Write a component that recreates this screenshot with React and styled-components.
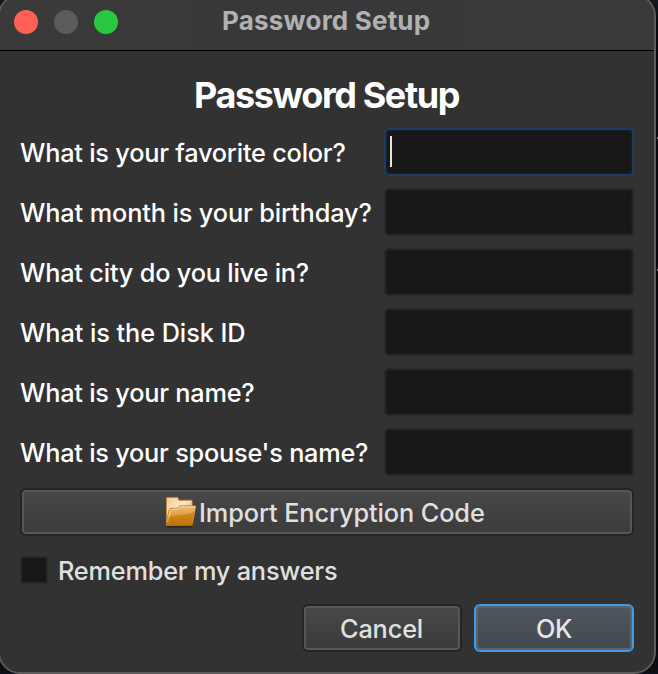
import React from "react";
import styled, { createGlobalStyle } from "styled-components";

const Global = createGlobalStyle`
  * { box-sizing: border-box; }
  html, body { margin: 0; height: 100%; background: #08090d; overflow: hidden; }
  body { font-family: Inter, "Liberation Sans", sans-serif; }
`;

const Desktop = styled.div`
  width: 658px;
  height: 674px;
  overflow: hidden;
  background:
    linear-gradient(#8c8c8c, #8c8c8c) 657px 137px / 1px 2px no-repeat,
    linear-gradient(#8c8c8c, #8c8c8c) 657px 269px / 1px 2px no-repeat,
    linear-gradient(180deg, #111a24 0, #07090c 24px, #050507 640px, #0d0f17 674px);
`;

const Window = styled.main`
  width: 658px;
  height: 680px;
  margin: -6px 0 0 -2px;
  border: 2px solid #5b5b5b;
  border-radius: 22px;
  overflow: hidden;
  background: #323232;
  display: flex;
  flex-direction: column;
`;

const TitleBar = styled.header`
  height: 55px;
  flex: none;
  background: linear-gradient(90deg, #3a3a3a, #38383a 50%, #3a3a39);
  border-bottom: 1px solid #000;
  display: grid;
  grid-template-columns: 222px 1fr;
  align-items: center;
`;

const Lights = styled.div`
  display: flex;
  gap: 16px;
  padding-left: 14px;
  margin-top: -2px;
`;

const Light = styled.span`
  width: 24px;
  height: 24px;
  border-radius: 50%;
  background: ${(p) => p.$color};
`;

const Label = styled.span`
  display: block;
  font-size: ${(p) => p.$size || 25.3}px;
  font-weight: ${(p) => p.$weight || 450};
  letter-spacing: ${(p) => p.$track || 0}px;
  line-height: 32px;
  color: ${(p) => p.$color || "#fff"};
  white-space: nowrap;
`;

const Title = styled(Label)`
  margin-top: -4px;
`;

const Content = styled.section`
  padding: 28px 20px 0;
  width: 654px;
`;

const Heading = styled.h1`
  margin: 0 0 14px 174px;
  height: 35px;
`;

const Questions = styled.div`
  display: grid;
  gap: 12px;
`;

const Question = styled.label`
  display: grid;
  grid-template-columns: 364px 250px;
  align-items: center;
  height: 48px;
`;

const QuestionText = styled(Label)`
  padding-top: 1px;
`;

const Field = styled.span`
  display: flex;
  align-items: center;
  height: 48px;
  padding-left: 4px;
  border: 2px solid ${(p) => (p.$focused ? "#1d3b5f" : "#272727")};
  border-radius: 5px;
  background: #171717;
  box-shadow: inset 0 0 0 1px ${(p) => (p.$focused ? "#17202a" : "#1b1b1b")};
`;

const Caret = styled.span`
  width: 2px;
  height: 31px;
  margin-top: -1px;
  background: #e8e3dd;
`;

const Button = styled.button`
  height: 48px;
  width: ${(p) => p.$width}px;
  padding: 1px 0 0 ${(p) => p.$inset}px;
  display: flex;
  align-items: center;
  font-family: inherit;
  border: 2px solid ${(p) => (p.$primary ? "#3d9bea" : "#252525")};
  border-radius: 6px;
  background: ${(p) =>
    p.$primary ? "linear-gradient(#50565e, #414850)" : "linear-gradient(#484848, #3b3b3b)"};
  box-shadow: inset 0 0 0 2px ${(p) => (p.$primary ? "#5d646c" : "#575757")};
`;

const ImportButton = styled(Button)`
  margin-top: 12px;
`;

const Folder = styled.svg`
  width: 32px;
  height: 32px;
  flex: none;
  margin: -2px 2px 0 1px;
`;

const Remember = styled.label`
  display: flex;
  gap: 10px;
  align-items: center;
  height: 28px;
  margin-top: 20px;
`;

const RememberText = styled(Label)`
  padding-top: 2px;
`;

const Checkbox = styled.span`
  width: 28px;
  height: 28px;
  border: 2px solid #292929;
  border-radius: 2px;
  background: #171717;
`;

const Actions = styled.footer`
  display: flex;
  justify-content: flex-end;
  gap: 12px;
  margin-top: 20px;
`;

const questions = [
  ["What is your favorite color?", -0.22],
  ["What month is your birthday?", -0.13],
  ["What city do you live in?", -0.2],
  ["What is the Disk ID", -0.07],
  ["What is your name?", -0.22],
  ["What is your spouse's name?", -0.23],
];

function FolderIcon() {
  return (
    <Folder viewBox="0 0 32 32" aria-hidden="true">
      <defs>
        <linearGradient id="back" x1="0" y1="0" x2="1" y2="1">
          <stop offset="0" stopColor="#f6c98f" />
          <stop offset=".45" stopColor="#fbe8cd" />
          <stop offset="1" stopColor="#d8963a" />
        </linearGradient>
        <linearGradient id="front" x1="0" y1="0" x2="0" y2="1">
          <stop offset="0" stopColor="#f0bd70" />
          <stop offset=".5" stopColor="#dc9c3c" />
          <stop offset="1" stopColor="#b97504" />
        </linearGradient>
      </defs>
      <path d="M2 30.8h25" stroke="#292725" strokeWidth="1.4" />
      <path d="M1.4 29V2.2Q1.4 1.4 2.3 1.4H12q1 0 1.3 1l.5 1.8h12.4q1 0 1 1V28z" fill="url(#back)" stroke="#c37e22" strokeWidth=".8" />
      <path d="M1.5 29.8 4.1 14.3q.3-1.6 1.8-1.7l6.4-.5 2.6-2.2h15.4q.7 0 .6.8l-3.1 17.7q-.2 1.4-1.5 1.4z" fill="url(#front)" />
      <path d="M1.6 25 4 14.2q.3-1.6 1.8-1.7l6.5-.4 2.6-2.3h15.8" fill="none" stroke="#b97820" strokeWidth=".9" />
      <path d="M3 26 5 15q.2-1.5 1.6-1.6l6.1-.4 2.7-2.2h14.5" fill="none" stroke="#ffe0aa" strokeWidth=".8" />
      <path d="m2.8 23.5 1.1-2.2c7-3 17-1.4 25.5-5.5l-2.3 12.5q-.2 1.5-1.5 1.5H1.5z" fill="#bd7300" opacity=".55" />
    </Folder>
  );
}

export default function App() {
  return (
    <Desktop>
      <Global />
      <Window>
        <TitleBar>
          <Lights>
            <Light $color="#ff5f57" />
            <Light $color="#5b5b5b" />
            <Light $color="#28c840" />
          </Lights>
          <Title $size={26} $weight={700} $track={0.2} $color="#b1b1b2">Password Setup</Title>
        </TitleBar>
        <Content>
          <Heading>
            <Label as="span" $size={36} $weight={700} $track={-1.4}>Password Setup</Label>
          </Heading>
          <Questions>
            {questions.map(([text, track], i) => (
              <Question key={text}>
                <QuestionText $track={track}>{text}</QuestionText>
                <Field $focused={i === 0}>{i === 0 && <Caret />}</Field>
              </Question>
            ))}
          </Questions>
          <ImportButton type="button" $width={614} $inset={142}>
            <FolderIcon />
            <Label $color="#e0e0e0" $track={-0.1}>Import Encryption Code</Label>
          </ImportButton>
          <Remember>
            <Checkbox />
            <RememberText $color="#e0e0e0" $track={-0.2}>Remember my answers</RememberText>
          </Remember>
          <Actions>
            <Button type="button" $width={160} $inset={36}>
              <Label $color="#e0e0e0" $track={-0.15}>Cancel</Label>
            </Button>
            <Button type="button" $primary $width={160} $inset={60}>
              <Label $color="#e6e6e6" $track={-0.3}>OK</Label>
            </Button>
          </Actions>
        </Content>
      </Window>
    </Desktop>
  );
}
